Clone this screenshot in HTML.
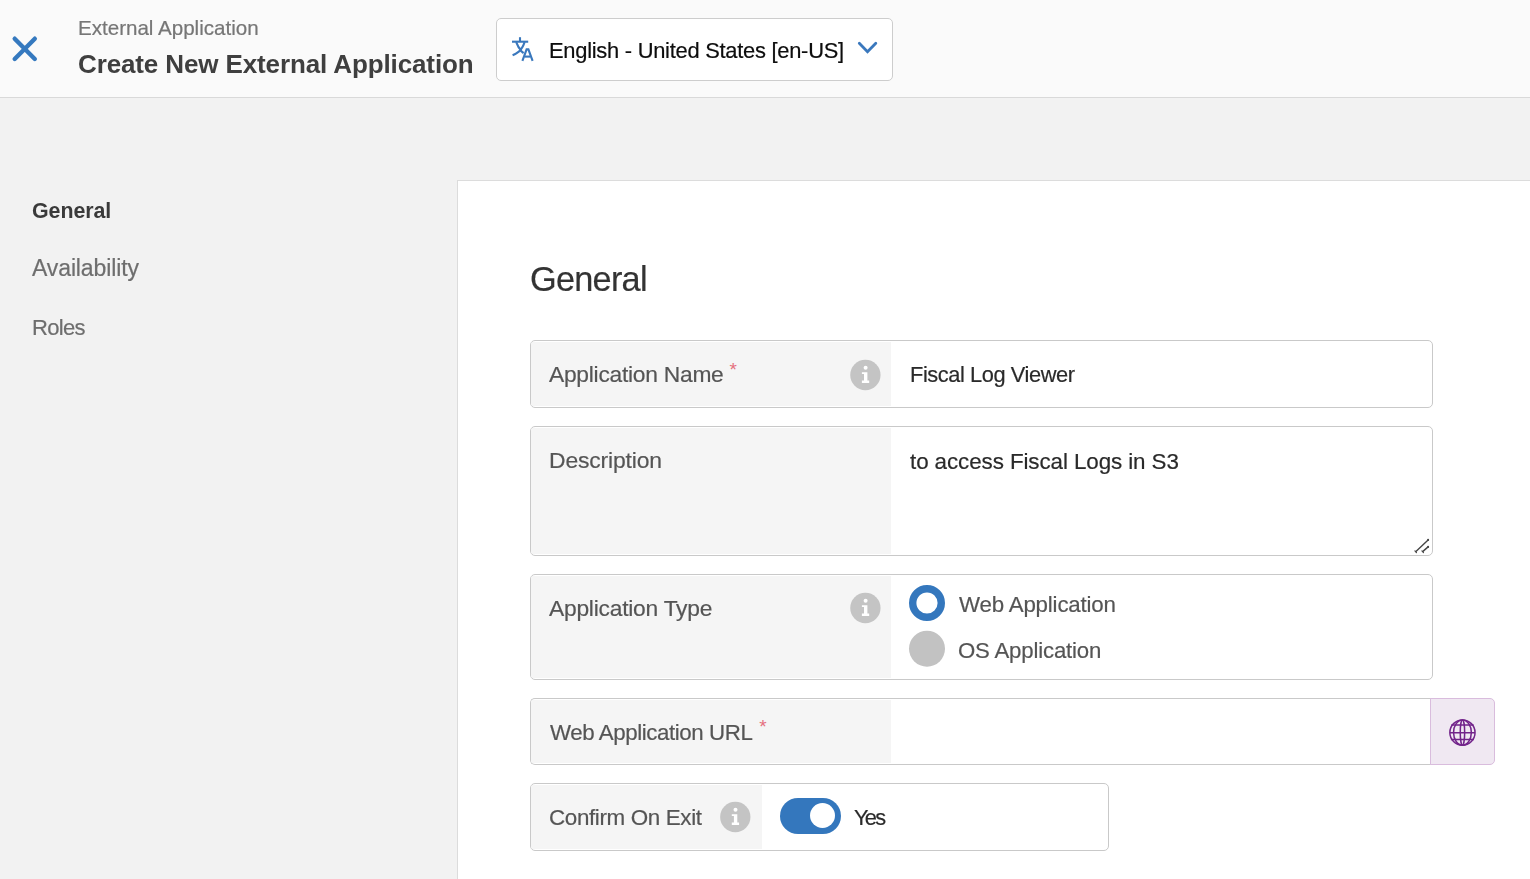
<!DOCTYPE html>
<html><head><meta charset="utf-8"><title>Create New External Application</title>
<style>
html,body{margin:0;padding:0}
body{width:1530px;height:879px;position:relative;overflow:hidden;background:#f2f2f2;font-family:"Liberation Sans",sans-serif}
.a{position:absolute;display:block}
.t{position:absolute;white-space:nowrap;will-change:transform;-webkit-text-stroke:0.2px currentColor}
.box{position:absolute;box-sizing:border-box;border:1px solid #c9c9c9;border-radius:5px;background:#fff;overflow:hidden}
.lab{position:absolute;left:0;top:1px;bottom:1px;background:#f5f5f5}
.star{position:absolute;color:#e5707e;font-size:19px;line-height:19px}
</style></head><body>
<div class="a" style="left:0;top:0;width:1530px;height:97px;background:#fafafa;border-bottom:1px solid #d9d9d9"></div>
<svg class="a" style="left:8px;top:32px" width="34" height="34" viewBox="0 0 34 34">
<path d="M6.7 6.7 L26.8 27 M26.8 6.7 L6.7 27" stroke="#3579bf" stroke-width="4.4" stroke-linecap="round" fill="none"/>
</svg>
<div class="t" style="left:78.35px;top:15.0px;font-size:20.6px;line-height:25px;letter-spacing:-0.014px;color:#767676;font-weight:400">External Application</div>
<div class="t" style="left:77.96px;top:48.7px;font-size:26.0px;line-height:31px;letter-spacing:-0.12px;color:#3f3f3f;font-weight:700;-webkit-text-stroke:0">Create New External Application</div>
<div class="a" style="left:496px;top:18px;width:397px;height:63px;box-sizing:border-box;border:1px solid #cdcdcd;border-radius:5px;background:#fff"></div>
<svg class="a" style="left:505px;top:32px" width="36" height="34" viewBox="505 32 36 34">
<g stroke="#3a78bd" stroke-width="2.1" fill="none" stroke-linecap="butt">
<path d="M520 37.2 V41.5"/>
<path d="M512 41.7 H528.2"/>
<path d="M516.2 42.2 Q518 47.5 521.5 50.8"/>
<path d="M524.6 42.2 Q522.5 48.5 518.8 51.6 Q516 53.8 512.6 55.2"/>
<path d="M520.6 50.6 L523.6 53.1"/>
<path d="M522.4 60.8 L526.6 49.4 H528.4 L532.6 60.8"/>
<path d="M524.6 56.6 H530.4"/>
</g></svg>
<div class="t" style="left:549.05px;top:37.81px;font-size:21.9px;line-height:26px;letter-spacing:-0.262px;color:#0d0d0d;font-weight:400">English - United States [en-US]</div>
<svg class="a" style="left:855px;top:38px" width="26" height="20" viewBox="855 38 26 20">
<path d="M859.3 43.3 L867.5 51.8 L875.8 43.3" stroke="#3a78bd" stroke-width="2.8" fill="none" stroke-linecap="round" stroke-linejoin="miter"/>
</svg>
<div class="t" style="left:31.84px;top:197.81px;font-size:21.4px;line-height:26px;letter-spacing:-0.065px;color:#3a3a3a;font-weight:700;-webkit-text-stroke:0">General</div>
<div class="t" style="left:32.4px;top:254.01px;font-size:23.0px;line-height:28px;letter-spacing:-0.113px;color:#6e6e6e;font-weight:400">Availability</div>
<div class="t" style="left:32.14px;top:315.01px;font-size:22.0px;line-height:26px;letter-spacing:-0.682px;color:#6e6e6e;font-weight:400">Roles</div>
<div class="a" style="left:457px;top:180px;width:1073px;height:699px;box-sizing:border-box;border-left:1px solid #dcdcdc;border-top:1px solid #dcdcdc;background:#fff"></div>
<div class="t" style="left:530.49px;top:259.0px;font-size:34.3px;line-height:41px;letter-spacing:-0.746px;color:#333333;font-weight:400">General</div>

<div class="box" style="left:530px;top:340px;width:903px;height:68px"><div class="lab" style="width:360px"></div></div>
<div class="t" style="left:549.4px;top:361.01px;font-size:22.8px;line-height:27px;letter-spacing:-0.258px;color:#555555;font-weight:400">Application Name</div>
<div class="star" style="left:729.5px;top:359.6px">*</div>
<svg class="a" style="left:849px;top:359px" width="32" height="32" viewBox="-0.40 0.00 32 32">
<circle cx="16" cy="16" r="15.15" fill="#c4c4c4"/>
<circle cx="16.2" cy="8.7" r="2" fill="#fff"/>
<path d="M12.5 13.3 H18 V21.5 H19.8 V24 H12.5 V21.5 H14.6 V15.1 H12.5 Z" fill="#fff"/>
</svg>
<div class="t" style="left:910.26px;top:362.21px;font-size:21.8px;line-height:26px;letter-spacing:-0.414px;color:#2a2a2a;font-weight:400">Fiscal Log Viewer</div>

<div class="box" style="left:530px;top:426px;width:903px;height:130px"><div class="lab" style="width:360px"></div></div>
<div class="t" style="left:548.57px;top:447.1px;font-size:22.9px;line-height:27px;letter-spacing:-0.143px;color:#555555;font-weight:400">Description</div>
<div class="t" style="left:909.58px;top:447.6px;font-size:22.4px;line-height:27px;letter-spacing:-0.092px;color:#2a2a2a;font-weight:400">to access Fiscal Logs in S3</div>
<svg class="a" style="left:1412px;top:536px" width="20" height="19" viewBox="1412 536 20 19">
<g stroke="#454545" fill="none" stroke-linecap="round">
<path d="M1415.9 551.4 L1428.1 539.9 M1422.9 551.4 L1428.1 546.9" stroke-width="1.4"/>
<path d="M1414.9 550.9 L1416.5 552.7 M1421.9 550.9 L1423.5 552.7" stroke-width="1.1"/>
</g><circle cx="1428.1" cy="539.9" r="1.05" fill="#454545"/><circle cx="1428.1" cy="546.9" r="1.05" fill="#454545"/>
</svg>

<div class="box" style="left:530px;top:574px;width:903px;height:106px"><div class="lab" style="width:360px"></div></div>
<div class="t" style="left:549.4px;top:594.9px;font-size:22.8px;line-height:27px;letter-spacing:-0.232px;color:#555555;font-weight:400">Application Type</div>
<svg class="a" style="left:849px;top:592px" width="32" height="32" viewBox="-0.40 0.00 32 32">
<circle cx="16" cy="16" r="15.15" fill="#c4c4c4"/>
<circle cx="16.2" cy="8.7" r="2" fill="#fff"/>
<path d="M12.5 13.3 H18 V21.5 H19.8 V24 H12.5 V21.5 H14.6 V15.1 H12.5 Z" fill="#fff"/>
</svg>
<svg class="a" style="left:905px;top:581px" width="44" height="90" viewBox="905 581 44 90">
<circle cx="927" cy="603" r="14.3" fill="#fff" stroke="#3477bd" stroke-width="7.4"/>
<circle cx="927" cy="648.7" r="18" fill="#c2c2c2"/>
</svg>
<div class="t" style="left:958.9px;top:590.7px;font-size:22.3px;line-height:27px;letter-spacing:-0.178px;color:#555555;font-weight:400">Web Application</div>
<div class="t" style="left:958.01px;top:636.91px;font-size:22.2px;line-height:27px;letter-spacing:-0.17px;color:#555555;font-weight:400">OS Application</div>

<div class="box" style="left:530px;top:698px;width:901px;height:67px;border-radius:5px 0 0 5px;border-right:none"><div class="lab" style="width:360px"></div></div>
<div class="a" style="left:1430px;top:698px;width:65px;height:67px;box-sizing:border-box;border:1px solid #d9bcdd;border-radius:0 5px 5px 0;background:#f0e8f2"></div>
<svg class="a" style="left:1446px;top:716px" width="33" height="33" viewBox="1446 716 33 33">
<g stroke="#72238a" stroke-width="1.5" fill="none">
<circle cx="1462.45" cy="732.55" r="12.6"/>
<ellipse cx="1462.45" cy="732.55" rx="2.2" ry="12.6"/>
<ellipse cx="1462.45" cy="732.55" rx="8.9" ry="12.6"/>
<path d="M1451.3 724.9 H1473.6 M1449.9 732.8 H1475.0 M1450.9 739.6 H1474.0"/>
</g></svg>
<div class="t" style="left:550.2px;top:718.81px;font-size:22.3px;line-height:27px;letter-spacing:-0.415px;color:#555555;font-weight:400">Web Application URL</div>
<div class="star" style="left:759.3px;top:716.9px">*</div>

<div class="box" style="left:530px;top:783px;width:579px;height:68px"><div class="lab" style="width:231px"></div></div>
<div class="t" style="left:548.88px;top:804.01px;font-size:22.4px;line-height:27px;letter-spacing:-0.358px;color:#555555;font-weight:400">Confirm On Exit</div>
<svg class="a" style="left:719px;top:801px" width="32" height="32" viewBox="-0.30 0.00 32 32">
<circle cx="16" cy="16" r="15.15" fill="#c4c4c4"/>
<circle cx="16.2" cy="8.7" r="2" fill="#fff"/>
<path d="M12.5 13.3 H18 V21.5 H19.8 V24 H12.5 V21.5 H14.6 V15.1 H12.5 Z" fill="#fff"/>
</svg>
<div class="a" style="left:780px;top:798px;width:61px;height:36px;border-radius:18px;background:#3477bd"></div>
<div class="a" style="left:810.1px;top:803.0px;width:25.2px;height:25.2px;border-radius:50%;background:#fff"></div>
<div class="t" style="left:853.56px;top:804.72px;font-size:21.8px;line-height:26px;letter-spacing:-1.737px;color:#2a2a2a;font-weight:400">Yes</div>
</body></html>
